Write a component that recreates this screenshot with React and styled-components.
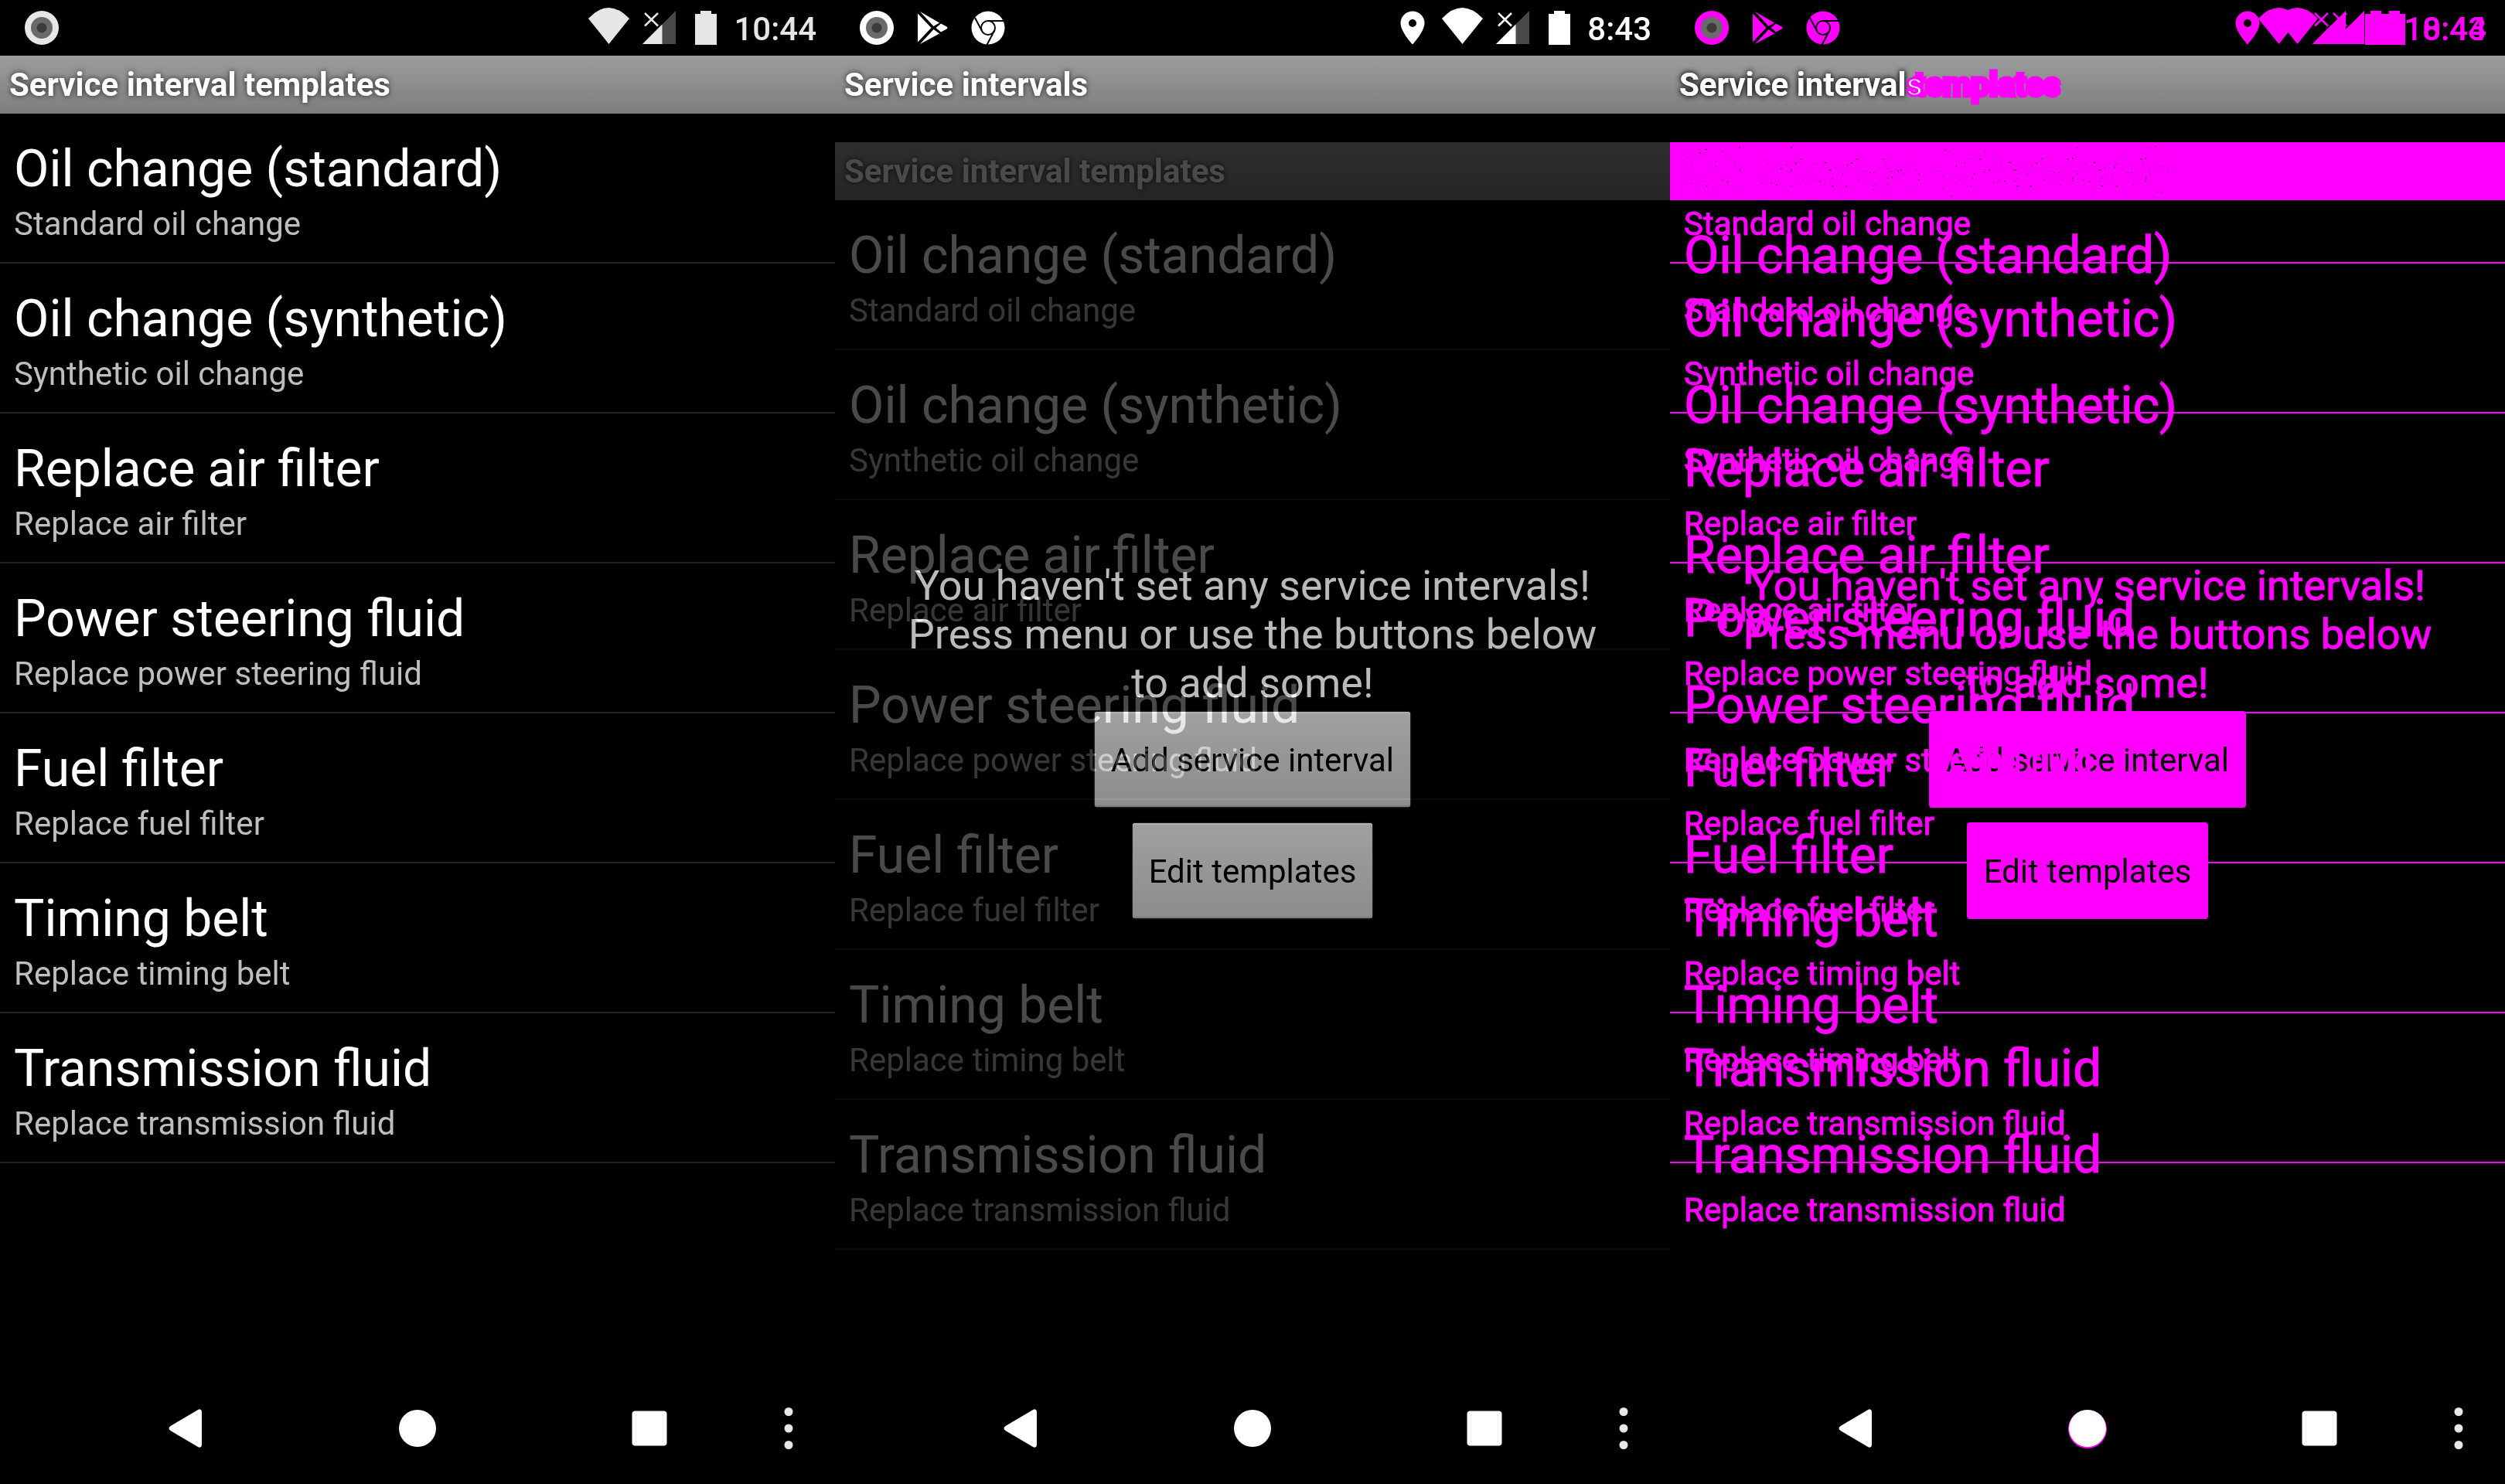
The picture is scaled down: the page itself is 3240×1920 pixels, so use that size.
import React from "react";
import styled, { createGlobalStyle, css } from "styled-components";

const MAGENTA = "#ff00ff";

const GlobalStyle = createGlobalStyle`
  * { box-sizing: border-box; }
  body { margin: 0; background: #000; font-family: Roboto, "Liberation Sans", sans-serif; }
  h1, h2, p, ul { margin: 0; padding: 0; font-weight: 400; }
  button { font: inherit; border: 0; padding: 0; background: none; }
`;

const marked = css`
  color: ${MAGENTA};
  -webkit-text-stroke: 1px ${MAGENTA};
`;

const Board = styled.main`
  display: grid;
  grid-template-columns: repeat(3, minmax(0, 1fr));
  min-height: 100vh;
  background: #000;
`;

const Screen = styled.section`
  display: flex;
  flex-direction: column;
  min-height: 100vh;
  background: #000;
  overflow: hidden;
`;

const StatusBar = styled.header`
  display: flex;
  justify-content: space-between;
  align-items: center;
  height: 72px;
  padding: 0 24px 0 30px;
  color: ${(p) => p.$tone};
`;

const Notifications = styled.div`
  display: flex;
  gap: 24px;
`;

const StatusIcons = styled.div`
  display: flex;
  align-items: center;
`;

const Clock = styled.time`
  width: ${(p) => (p.$wide ? "129px" : "105px")};
  font-size: 42px;
  line-height: 48px;
  padding-top: 4px;
  font-weight: 500;
  text-align: right;
`;

const TitleBar = styled.h1`
  height: 75px;
  padding: 0 12px;
  background: linear-gradient(#9c9c9c, #7e7e7e);
  color: #fff;
  font-size: 42px;
  line-height: 75px;
  font-weight: 700;
  text-shadow: 0 0 7px rgba(0, 0, 0, 0.75);
`;

const Content = styled.div`
  flex: 1;
  display: grid;
`;

const Layer = styled.div`
  grid-area: 1 / 1;
  min-width: 0;
  padding-top: ${(p) => (p.$shifted ? "37px" : "0")};
  opacity: ${(p) => (p.$ghost ? 0.29 : 1)};
  mix-blend-mode: ${(p) => (p.$ghost ? "plus-lighter" : "normal")};
  pointer-events: ${(p) => (p.$shifted ? "none" : "auto")};
`;

const MarkedBar = styled.div`
  height: 75px;
  background: ${MAGENTA};
`;

const SpeckledText = styled.text`
  font-size: 66px;
  fill: none;
  stroke: #202020;
  stroke-width: 1px;
  stroke-dasharray: 1 27 2 19 1 33;
`;

const List = styled.ul`
  list-style: none;
`;

const Row = styled.li`
  height: 194px;
  padding: 33px 18px 0;
  border-bottom: 2px solid ${(p) => (p.$marked ? (p.$noLine ? "transparent" : MAGENTA) : "#242424")};
`;

const RowTitle = styled.h2`
  color: #fff;
  font-size: 66px;
  line-height: 77px;
  margin-bottom: 8px;
  white-space: nowrap;
  ${(p) => p.$marked && marked}
`;

const RowNote = styled.p`
  color: #bebebe;
  font-size: 42px;
  line-height: 49px;
  white-space: nowrap;
  ${(p) => p.$marked && marked}
`;

const Empty = styled.div`
  grid-area: 1 / 1;
  display: flex;
  flex-direction: column;
  align-items: center;
  padding: 579px 90px 0;
`;

const Message = styled.p`
  max-width: 900px;
  color: #bababa;
  font-size: 54px;
  line-height: 63px;
  text-align: center;
  margin-bottom: 6px;
  ${(p) => p.$marked && marked}
`;

const ActionButton = styled.button`
  height: 123px;
  margin-bottom: 21px;
  padding: 2px 21px 0;
  border-radius: 3px;
  color: #000;
  font-size: 42px;
  line-height: 49px;
  background: ${(p) => (p.$marked ? MAGENTA : "linear-gradient(#a0a0a0, #8c8c8c)")};
  box-shadow: ${(p) => (p.$marked ? `0 0 0 1px ${MAGENTA}` : "inset 0 2px 1px #b0b0b0, inset 0 -2px 1px #7a7a7a, 0 0 2px #777")};
`;

const NavBar = styled.nav`
  display: flex;
  align-items: center;
  height: 144px;
  padding-left: 90px;
`;

const NavButton = styled.button`
  display: grid;
  place-items: center;
  width: ${(p) => (p.$menu ? "60px" : "300px")};
  height: 144px;
`;

const Camera = ({ tone }) => (
  <svg width="48" height="48" viewBox="0 0 48 48">
    <circle cx="24" cy="24" r="22" fill={tone} />
    <circle cx="24" cy="24" r="14" fill="#6a6a6a" />
    <circle cx="24" cy="24" r="6.500" fill="#3c3c3c" />
  </svg>
);

const Play = () => (
  <svg width="48" height="48" viewBox="0 0 48 48" fill="currentColor">
    <path d="M5 5.500L22.500 24L5 42.500zM8 3L33 17.500L25.500 22zM8 45L33 31.500L25.500 26zM35 18.500L42.500 22.500q2 1.500 0 3L35 29.500L28.500 24z" />
  </svg>
);

const ChromeIcon = () => (
  <svg width="48" height="48" viewBox="0 0 48 48">
    <circle cx="24" cy="24" r="21.500" fill="currentColor" />
    <g fill="none" stroke="#000" strokeWidth="2">
      <circle cx="24" cy="24" r="9" />
      <path d="M24 15h20M15.800 27.500L7 11M32.200 27.500L22.500 46" />
    </g>
  </svg>
);

const Pin = () => <path d="M16 14.500a15.500 15.500 0 0 1 15.500 15.500c0 11-15.500 27.500-15.500 27.500S.5 41 .5 30A15.500 15.500 0 0 1 16 14.500zM16 25a5 5 0 1 0 0 10 5 5 0 0 0 0-10z" fillRule="evenodd" />;
const Wifi = () => <path d="M0 24Q26-4 53 24L26.500 57z" />;
const Signal = ({ dim }) => (
  <>
    <path d="M0 57L43 14v43z" fill={dim} />
    <path d="M0 57L25.500 31.500V57z" />
    <path d="M3 17l17 16.500M20 17L3 33.500" stroke="currentColor" strokeWidth="2.500" />
  </>
);
const Battery = () => <path d="M0 18h7v-4h14v4h7v40H0z" />;

const SystemIcons = ({ withPin }) => (
  <svg width={withPin ? 220 : 166} height="72" viewBox={withPin ? "-30 0 220 72" : "24 0 166 72"} fill="currentColor">
    {withPin && <g transform="translate(-30 0)"><Pin /></g>}
    <g transform="translate(24 0)"><Wifi /></g>
    <g transform="translate(94 0)"><Signal dim="#4a4a4a" /></g>
    <g transform="translate(162 0)"><Battery /></g>
  </svg>
);

const OverlaidIcons = () => (
  <svg width="220" height="72" viewBox="-30 0 220 72" fill="currentColor">
    <g transform="translate(-30 0)"><Pin /></g>
    {[0, 24].map((dx) => (
      <g key={dx} transform={`translate(${dx} 0)`}>
        <Wifi />
        <g transform="translate(70 0)"><Signal dim={MAGENTA} /></g>
        <g transform="translate(138 0)"><Battery /></g>
      </g>
    ))}
    <path d="M138 18h52v40h-52z" />
  </svg>
);

const ITEMS = [
  ["Oil change (standard)", "Standard oil change"],
  ["Oil change (synthetic)", "Synthetic oil change"],
  ["Replace air filter", "Replace air filter"],
  ["Power steering fluid", "Replace power steering fluid"],
  ["Fuel filter", "Replace fuel filter"],
  ["Timing belt", "Replace timing belt"],
  ["Transmission fluid", "Replace transmission fluid"],
];

const Templates = ({ $marked, $noLine }) => (
  <List>
    {ITEMS.map(([title, note]) => (
      <Row key={title} $marked={$marked} $noLine={$noLine}>
        <RowTitle $marked={$marked}>{title}</RowTitle>
        <RowNote $marked={$marked}>{note}</RowNote>
      </Row>
    ))}
  </List>
);

const EmptyState = ({ $marked }) => (
  <Empty>
    <Message $marked={$marked}>You haven't set any service intervals! Press menu or use the buttons below to add some!</Message>
    <ActionButton $marked={$marked}>Add service interval</ActionButton>
    <ActionButton $marked={$marked}>Edit templates</ActionButton>
  </Empty>
);

const Navigation = ({ $marked }) => (
  <NavBar>
    <NavButton aria-label="Back">
      <svg width="60" height="60" viewBox="0 0 60 60"><path d="M10.500 27L46 6q4-2 5 2v44q-1 4-5 2L10.500 33q-4-3 0-6z" fill="#fff" /></svg>
    </NavButton>
    <NavButton aria-label="Home">
      <svg width="60" height="60" viewBox="0 0 60 60">
        {$marked && <circle cx="30" cy="31" r="25" fill={MAGENTA} />}
        <circle cx="30" cy="30" r="24" fill="#fff" />
      </svg>
    </NavButton>
    <NavButton aria-label="Recents">
      <svg width="60" height="60" viewBox="0 0 60 60"><rect x="7.500" y="7.500" width="45" height="45" rx="4" fill="#fff" /></svg>
    </NavButton>
    <NavButton $menu aria-label="More options">
      <svg width="60" height="60" viewBox="0 0 60 60" fill="#e8e8e8">
        <circle cx="30" cy="8.500" r="5.500" /><circle cx="30" cy="30" r="5.500" /><circle cx="30" cy="51.500" r="5.500" />
      </svg>
    </NavButton>
  </NavBar>
);

const OverlaidClock = styled.div`
  display: grid;
  justify-items: end;
  width: 105px;
  grid-template-columns: 105px;
  > * { grid-area: 1 / 1; }
`;

const MarkedWords = styled.span`
  color: ${MAGENTA};
  -webkit-text-stroke: 5px ${MAGENTA};
  text-shadow: none;
`;

const MarkedEnding = styled.span`
  -webkit-text-stroke: 3px ${MAGENTA};
  text-shadow: none;
`;

const TitleLine = styled.span`
  grid-area: 1 / 1;
`;

const StackedTitle = styled(TitleBar)`
  display: grid;
`;

export default function App() {
  return (
    <>
      <GlobalStyle />
      <Board>
        <Screen>
          <StatusBar $tone="#e6e6e6">
            <Notifications><Camera tone="#e6e6e6" /></Notifications>
            <StatusIcons><SystemIcons /><Clock $wide>10:44</Clock></StatusIcons>
          </StatusBar>
          <TitleBar>Service interval templates</TitleBar>
          <Content><Layer><Templates /></Layer></Content>
          <Navigation />
        </Screen>
        <Screen>
          <StatusBar $tone="#fff">
            <Notifications><Camera tone="#fff" /><Play /><ChromeIcon /></Notifications>
            <StatusIcons><SystemIcons withPin /><Clock>8:43</Clock></StatusIcons>
          </StatusBar>
          <TitleBar>Service intervals</TitleBar>
          <Content>
            <EmptyState />
            <Layer $shifted $ghost>
              <TitleBar as="h2">Service interval templates</TitleBar>
              <Templates />
            </Layer>
          </Content>
          <Navigation />
        </Screen>
        <Screen>
          <StatusBar $tone={MAGENTA}>
            <Notifications><Camera tone={MAGENTA} /><Play /><ChromeIcon /></Notifications>
            <StatusIcons>
              <OverlaidIcons />
              <OverlaidClock><Clock $wide>10:44</Clock><Clock>8:43</Clock></OverlaidClock>
            </StatusIcons>
          </StatusBar>
          <StackedTitle>
            <TitleLine>Service interval <MarkedWords>templates</MarkedWords></TitleLine>
            <TitleLine>Service interval<MarkedEnding>s</MarkedEnding></TitleLine>
          </StackedTitle>
          <Content>
            <Layer><Templates $marked /></Layer>
            <EmptyState $marked />
            <Layer $shifted>
              <MarkedBar>
                <svg width="100%" height="75">
                  <SpeckledText x="18" y="57">Oil change (standard)</SpeckledText>
                </svg>
              </MarkedBar>
              <Templates $marked $noLine />
            </Layer>
          </Content>
          <Navigation $marked />
        </Screen>
      </Board>
    </>
  );
}
